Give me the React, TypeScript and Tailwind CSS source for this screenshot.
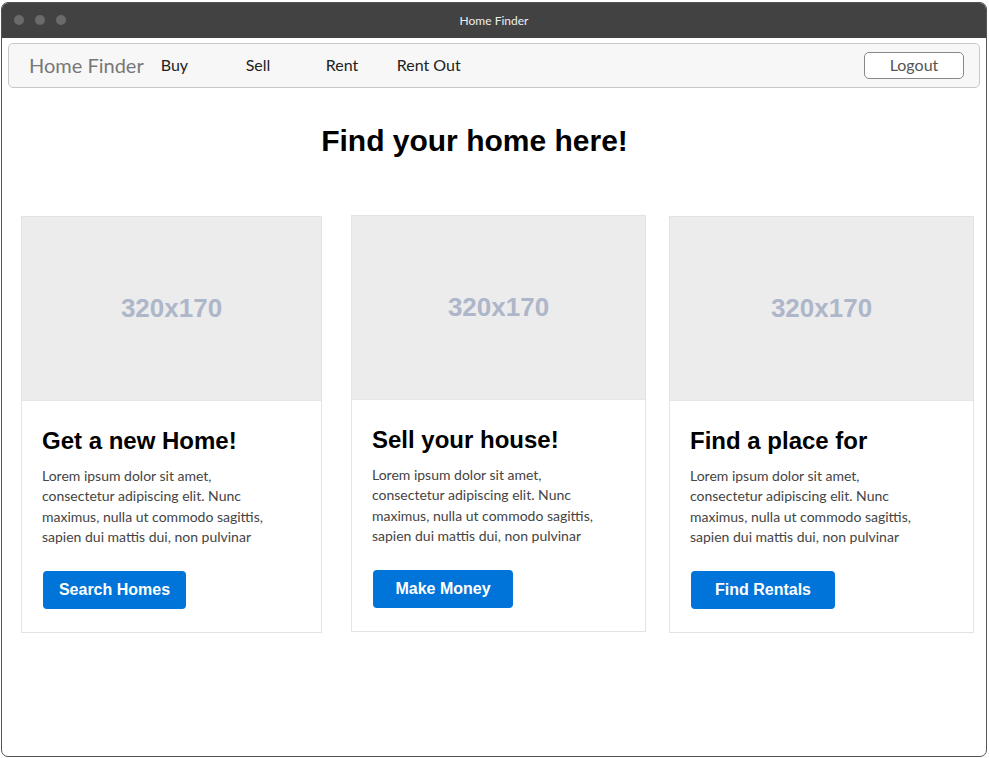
import React from "react";

const LOREM =
  "Lorem ipsum dolor sit amet, consectetur adipiscing elit. Nunc maximus, nulla ut commodo sagittis, sapien dui mattis dui, non pulvinar";

interface CardProps {
  title: string;
  action: string;
  buttonWidth: string;
  className?: string;
}

function Card({ title, action, buttonWidth, className = "" }: CardProps) {
  return (
    <div className={`flex flex-col border border-[#e3e3e3] bg-white ${className}`}>
      <div className="flex h-[184px] items-center justify-center border-b border-[#e6e6e6] bg-[#ececec]">
        <span className="font-['Liberation_Sans',Arial,sans-serif] text-[26px] font-bold text-[#aeb6ca]">
          320x170
        </span>
      </div>
      <div className="flex flex-col px-[20px] pt-[26px] pb-[23px]">
        <h2 className="font-['Liberation_Sans',Arial,sans-serif] text-[24px] leading-[28px] font-bold text-black">
          {title}
        </h2>
        <p className="mt-[11px] pr-[20px] font-['Lato',sans-serif] text-[14px] leading-[20.4px] text-[#444]">
          {LOREM}
        </p>
        <div className="mt-[23px] pl-px">
          <button
            className={`h-[38px] rounded-[4px] bg-[#0074d9] font-['Liberation_Sans',Arial,sans-serif] text-[16px] font-bold text-white ${buttonWidth}`}
          >
            {action}
          </button>
        </div>
      </div>
    </div>
  );
}

export default function App() {
  return (
    <div className="h-[758px] w-[989px] bg-white pt-[2px] pr-[2px] pb-px pl-[1px]">
      <div className="flex h-full flex-col overflow-hidden rounded-[7px] border border-[#555] bg-white">
        {/* title bar */}
        <div className="relative flex h-[35px] shrink-0 items-center justify-center bg-[#424242]">
          <div className="absolute left-[12px] top-[12px] flex gap-[11px]">
            <span className="h-[10px] w-[10px] rounded-full bg-[#6a6a6a]" />
            <span className="h-[10px] w-[10px] rounded-full bg-[#6a6a6a]" />
            <span className="h-[10px] w-[10px] rounded-full bg-[#6a6a6a]" />
          </div>
          <span className="font-['Lato',sans-serif] text-[12px] text-[#eeeeee]">Home Finder</span>
        </div>

        {/* navbar */}
        <div className="mx-[6px] mt-[5px] flex h-[45px] items-center rounded-[5px] border border-[#c8c8c8] bg-[#f7f7f7] pl-[20px] pr-[15px] pb-px font-['Lato',sans-serif]">
          <span className="mr-[17px] text-[20px] text-[#777]">Home Finder</span>
          <span className="w-[85px] text-[16px] text-[#222]">Buy</span>
          <span className="w-[80px] text-[16px] text-[#222]">Sell</span>
          <span className="w-[71px] text-[16px] text-[#222]">Rent</span>
          <span className="text-[16px] text-[#222]">Rent Out</span>
          <button className="ml-auto h-[27px] w-[100px] rounded-[5px] border border-[#888] bg-white text-[16px] text-[#555]">
            Logout
          </button>
        </div>

        {/* heading */}
        <div className="flex justify-center pr-[39px] pt-[36px]">
          <h1 className="font-['Liberation_Sans',Arial,sans-serif] text-[30px] leading-[34px] font-bold text-black">
            Find your home here!
          </h1>
        </div>

        {/* cards */}
        <div className="mt-[58px] flex items-start pl-[19px]">
          <Card title="Get a new Home!" action="Search Homes" buttonWidth="w-[143px]" className="w-[301px]" />
          <Card
            title="Sell your house!"
            action="Make Money"
            buttonWidth="w-[140px]"
            className="ml-[29px] -mt-px w-[295px]"
          />
          <Card title="Find a place for" action="Find Rentals" buttonWidth="w-[144px]" className="ml-[23px] w-[305px]" />
        </div>
      </div>
    </div>
  );
}
